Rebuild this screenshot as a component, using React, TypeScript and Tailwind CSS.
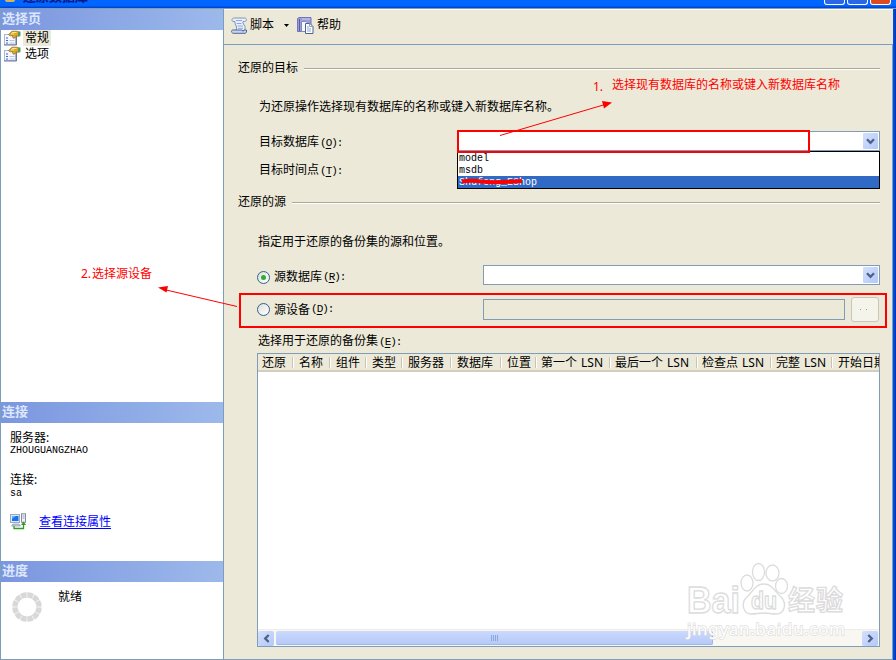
import { type ReactNode } from 'react';
import clsx from 'clsx';

const columns = [
  { label: '还原', width: 'w-[36px]' },
  { label: '名称', width: 'w-[37px]' },
  { label: '组件', width: 'w-[36px]' },
  { label: '类型', width: 'w-[36px]' },
  { label: '服务器', width: 'w-[49px]' },
  { label: '数据库', width: 'w-[50px]' },
  { label: '位置', width: 'w-[35px]' },
  { label: '第一个', lsn: true, width: 'w-[74px]' },
  { label: '最后一个', lsn: true, width: 'w-[87px]' },
  { label: '检查点', lsn: true, width: 'w-[74px]' },
  { label: '完整', lsn: true, width: 'w-[61px]' },
  { label: '开始日期', width: 'w-[60px]' },
];

function PropertiesIcon() {
  return (
    <svg width="17" height="16" viewBox="0 0 17 16" className="shrink-0">
      <rect x=".5" y="4.500" width="11" height="10" fill="#f6f8fe" stroke="#a9b6d3" />
      <path d="M0 15h12.500V6" fill="none" stroke="#6c7896" />
      <path d="M2 8h2M2 10.500h2M2 13h2" stroke="#3f62bd" />
      <path d="M5.500 10.500h5M5.500 13h5" stroke="#b5c3e6" />
      <path d="M4.500 4.500 8 1.200h5l2.500 1v4h-3l-2.500 2.300-1.800-1.500L9 5.200 6 5.800z" fill="#dba727" stroke="#7a5c22" strokeWidth=".6" />
      <path d="M8 2.500h4.500M7 4h3" stroke="#ffe885" />
      <path d="M14 1.500h2.500V6H14z" fill="#5a9a60" />
    </svg>
  );
}

function ScriptIcon() {
  return (
    <svg width="17" height="17" viewBox="0 0 17 17">
      <path d="M3.500 1h10c2.500 0 2.500 3.500 0 3.500H12V6l2 3.500v4H5.500V10L4 6.500v-2H2C0 3.500 1 1 3.500 1z" fill="#e9f0fd" stroke="#7f93b8" />
      <path d="M1.500 13h9.500l1 1.300 1-1.300h2.500v2l-1 1.300h-12C.2 16.300-.2 13.500 1.500 13z" fill="#c5d5f2" stroke="#52678f" />
      <path d="M5 3.500h6M5.500 6.500h5M6.500 9h5.500M7 11.300h5" stroke="#8da9df" />
    </svg>
  );
}

function HelpIcon() {
  return (
    <svg width="17" height="17" viewBox="0 0 17 17">
      <path d="M.5 1.500 2 .5h12v14H.500z" fill="#9d9edb" stroke="#7274b5" />
      <path d="M2.500 2v12" stroke="#5b5c9c" />
      <path d="M5 2h8" stroke="#c9caf1" />
      <path d="M4.500 4.500H9l2 2v8H4.500z" fill="#f6f8ff" stroke="#7f8cb5" />
      <path d="M8.500 6.500H13l3 3v7H8.500z" fill="#fff" stroke="#4d648e" />
      <path d="M12.500 6.500v3H16M10 10h2M10 12h4M10 14h4" fill="none" stroke="#8da5d3" />
    </svg>
  );
}

function ConnectionIcon() {
  return (
    <svg width="17" height="17" viewBox="0 0 17 17">
      <rect x=".5" y="1.500" width="9" height="8" fill="#dce7f8" stroke="#9aaac6" />
      <rect x="2" y="3" width="6.500" height="5" fill="#1b72e8" />
      <path d="M2 3h4L2 6z" fill="#5cafff" />
      <path d="M3 11h6l1.500 2H1.500z" fill="#c4cddd" stroke="#8b98ad" strokeWidth=".7" />
      <rect x="11.500" y=".8" width="4" height="8.500" fill="#eef0f5" stroke="#858e9f" />
      <path d="M12.500 3h2M12.500 5h2" stroke="#9aa3b4" />
      <path d="M4 13v2.500h9.500V11" fill="none" stroke="#329b22" strokeWidth="1.300" />
      <path d="m11 12 2.500-3.500L16 12z" fill="#329b22" />
    </svg>
  );
}

function Spinner() {
  const segments = Array.from({ length: 12 }, (_, i) => i * 30 + 15);
  return (
    <svg width="30" height="30" viewBox="-15 -15 30 30">
      {segments.map((angle) => (
        <path key={angle} d="M-2.200-9-3.400-14.300Q0-15.500 3.400-14.300L2.200-9Q0-9.800-2.200-9z" fill="#d8d8d8" transform={`rotate(${angle})`} />
      ))}
    </svg>
  );
}

function Chevron({ className }: { className?: string }) {
  return (
    <svg width="9" height="7" viewBox="0 0 9 7" className={className}>
      <path d="m1 1.300 3.500 3.500L8 1.300" fill="none" stroke="#4d6185" strokeWidth="2.300" />
    </svg>
  );
}

function Combo({ className }: { className?: string }) {
  return (
    <div className={clsx('flex items-center justify-end border border-[#7f9db9] bg-white pr-px', className)}>
      <div className="flex h-[16px] w-[15px] items-center justify-center rounded-[1px] bg-linear-to-br from-[#d3dffd] to-[#b4c8f7]">
        <Chevron />
      </div>
    </div>
  );
}

function Mnemonic({ letter }: { letter: string }) {
  return (
    <span className="ml-px font-['Liberation_Mono'] text-[11px] leading-none tracking-[-1px]">
      (<u className="underline-offset-2">{letter}</u>):
    </span>
  );
}

function PanelHeader({ children }: { children: ReactNode }) {
  return (
    <h2 className="flex h-[21px] shrink-0 items-center bg-linear-to-r from-[#7b96df] to-[#9db9eb] pb-[4px] pl-px text-[13px] font-bold text-[#dce7fc]">
      {children}
    </h2>
  );
}

function GroupTitle({ children }: { children: ReactNode }) {
  return (
    <div className="flex h-[20px] items-center gap-[6px]">
      <span>{children}</span>
      <span className="mt-px h-[2px] flex-1 border-t border-[#aca899] bg-white" />
    </div>
  );
}

function Radio({ checked }: { checked?: boolean }) {
  return (
    <span className="mr-[4px] flex size-[13px] items-center justify-center rounded-full border border-[#315f91] bg-linear-to-br from-[#dfdfda] to-white">
      {checked && <span className="size-[5px] rounded-full bg-[#2fae2f]" />}
    </span>
  );
}

function Sidebar() {
  return (
    <aside className="flex w-[224px] shrink-0 flex-col border-x border-b border-[#7b9ebd] bg-white">
      <PanelHeader>选择页</PanelHeader>
      <ul className="h-[372px]">
        {['常规', '选项'].map((item, i) => (
          <li key={item} className="flex h-[16px] items-center pl-[3px]">
            <PropertiesIcon />
            <span className={clsx('ml-[2px] flex h-[16px] items-center pr-[2px] pl-[2px]', i === 0 && 'bg-[#ece9d8]')}>{item}</span>
          </li>
        ))}
      </ul>
      <PanelHeader>连接</PanelHeader>
      <div className="flex h-[138px] flex-col pt-[7px] pl-[9px]">
        <span className="h-[15px] leading-[15px]">服务器:</span>
        <span className="h-[12px] font-['Liberation_Mono'] text-[10px] leading-[12px]">ZHOUGUANGZHAO</span>
        <span className="mt-[15px] h-[15px] leading-[15px]">连接:</span>
        <span className="h-[12px] font-['Liberation_Mono'] text-[10px] leading-[13px]">sa</span>
        <div className="mt-[14px] flex items-center gap-[12px]">
          <ConnectionIcon />
          <a className="text-[#0000ff] underline underline-offset-2">查看连接属性</a>
        </div>
      </div>
      <PanelHeader>进度</PanelHeader>
      <div className="flex flex-1 pt-[10px] pl-[11px]">
        <Spinner />
        <span className="-mt-[3px] ml-[16px]">就绪</span>
      </div>
    </aside>
  );
}

function Toolbar() {
  return (
    <div className="flex h-[35px] shrink-0 items-center border-b border-[#7b9ebd] pb-[4px] pl-[7px]">
      <ScriptIcon />
      <span className="ml-[2px]">脚本</span>
      <svg width="5" height="3" className="ml-[10px]">
        <path d="M0 0h5L2.500 3z" />
      </svg>
      <span className="ml-[8px]">
        <HelpIcon />
      </span>
      <span className="ml-[3px]">帮助</span>
    </div>
  );
}

function ScrollButton({ left }: { left?: boolean }) {
  return (
    <div className="flex h-[15px] w-[16px] shrink-0 items-center justify-center rounded-[2px] bg-linear-to-br from-[#d3dffd] to-[#b4c8f7]">
      <Chevron className={left ? 'rotate-90' : '-rotate-90'} />
    </div>
  );
}

function BackupTable() {
  return (
    <div className="-ml-px flex h-[294px] flex-col border border-[#7f9db9] bg-white">
      <div className="flex h-[18px] shrink-0 overflow-hidden border-b-2 border-[#d2cebd] bg-[#ece9d8]">
        {columns.map((col, i) => (
          <div key={col.label} className={clsx('flex shrink-0 items-center justify-between pt-px whitespace-nowrap', i === 0 || col.lsn ? 'pl-[4px]' : 'pl-[5px]', col.width)}>
            <span>
              {col.label}
              {col.lsn && <span className="ml-[4px]">LSN</span>}
            </span>
            <span className="h-[11px] w-[2px] border-l border-[#c7c5b2] bg-white" />
          </div>
        ))}
      </div>
      <div className="flex-1" />
      <div className="flex h-[17px] shrink-0 items-center border-t border-[#eeede5] bg-[#f8f7f2] pr-px">
        <ScrollButton left />
        <div className="ml-[2px] flex h-[14px] w-[437px] items-center justify-center gap-px rounded-[2px] border-r border-b border-[#9fb5e8] bg-linear-to-b from-[#cbd9fd] to-[#b5c9f9]">
          {[0, 1, 2, 3].map((n) => (
            <span key={n} className="h-[6px] w-px bg-[#8ca5dd]" />
          ))}
        </div>
        <div className="flex-1" />
        <ScrollButton />
      </div>
    </div>
  );
}

function Watermark() {
  return (
    <svg width="166" height="80" viewBox="0 0 166 80" className="absolute top-[560px] left-[684px]" fill="#fff" stroke="#dcdcdc" strokeWidth="1.300">
      <text x="3" y="53" fontSize="36" fontWeight="700" fontFamily="Liberation Sans" textLength="53" lengthAdjust="spacingAndGlyphs">Bai</text>
      <ellipse cx="63" cy="23" rx="6" ry="8" />
      <ellipse cx="74.500" cy="12" rx="6" ry="8.500" />
      <ellipse cx="88.500" cy="13" rx="6.500" ry="8" />
      <ellipse cx="97.500" cy="26" rx="6" ry="7.500" />
      <path d="M80 24c8 0 11 8 17 13 6 6 4 17-5 17-5 0-7-1-12-1s-8 1-13 1c-8 0-10-11-5-16 7-6 9-14 18-14z" />
      <text x="67" y="49" fontSize="23" fontFamily="Liberation Sans" fontWeight="700" textLength="26" lengthAdjust="spacingAndGlyphs">du</text>
      <text x="104" y="50" fontSize="27" fontWeight="700" fontFamily="Noto Sans CJK SC" textLength="55">经验</text>
      <text x="3" y="75" fontSize="17" fontFamily="Noto Sans" stroke="#dedede" strokeWidth="1.400" paintOrder="stroke" textLength="158">jingyan.baidu.com</text>
    </svg>
  );
}

function Annotations() {
  return (
    <div className="pointer-events-none absolute inset-0 z-20 text-[#ff0000]">
      <div className="absolute top-[130px] left-[457px] h-[23px] w-[353px] border-2 border-[#ff0000]" />
      <div className="absolute top-[293px] left-[239px] h-[35px] w-[648px] border-2 border-[#ff0000]" />
      <span className="absolute top-[78px] left-[593px] leading-[18px]">1.</span>
      <span className="absolute top-[76px] left-[612px] leading-[18px] whitespace-nowrap">选择现有数据库的名称或键入新数据库名称</span>
      <span className="absolute top-[265px] left-[81px] leading-[18px] whitespace-nowrap">
        2.<span className="ml-px">选择源设备</span>
      </span>
      <svg width="896" height="660" className="absolute inset-0" stroke="#ff0000" fill="#ff0000">
        <path d="M500 135.500 605 104.500M237 306.500 164 289.500" />
        <path d="m602 101 10 1.500-8 6zM158 287.500l10-1.500-1.500 6.500z" stroke="none" />
        <path d="M462 181.500q10-1.500 20 0t40-.5" fill="none" strokeWidth="4" />
      </svg>
    </div>
  );
}

export default function App() {
  return (
    <div className="relative flex h-[660px] w-[896px] flex-col overflow-hidden bg-[#ece9d8] font-['Noto_Sans','Noto_Sans_CJK_SC',sans-serif] text-[12px] leading-[16px] text-black">
      <header className="flex h-[9px] shrink-0 items-start justify-between overflow-hidden border-b border-[#7b9ebd] bg-linear-to-b from-[#0066ff] from-70% to-[#003dc8] pr-[5px]">
        <div className="flex items-start gap-[8px] pl-[5px]">
          <span className="h-[2px] w-[10px] rounded-b-full bg-[#d8b55b]" />
          <span className="flex h-[3px] items-end overflow-hidden text-[13px] leading-[14px] font-bold text-[#0a1883]">还原数据库</span>
        </div>
        <div className="flex gap-[2px]">
          <span className="h-[5px] w-[21px] rounded-b-[3px] border border-t-0 border-white bg-[#2b66e5]" />
          <span className="h-[5px] w-[21px] rounded-b-[3px] border border-t-0 border-white bg-[#2b66e5]" />
          <span className="h-[5px] w-[21px] rounded-b-[3px] border border-t-0 border-white bg-[#dc4a20]" />
        </div>
      </header>
      <div className="flex min-h-0 flex-1">
        <Sidebar />
        <main className="flex min-w-0 flex-1 flex-col border-t border-white">
          <Toolbar />
          <div className="flex flex-1 flex-col border-r border-b border-[#7b9ebd] pt-[13px] pr-[12px] pl-[14px]">
            <GroupTitle>还原的目标</GroupTitle>
            <div className="flex flex-col pl-[21px]">
              <p className="mt-[21px] h-[16px]">为还原操作选择现有数据库的名称或键入新数据库名称。</p>
              <div className="mt-[16px] flex h-[21px] items-center">
                <span className="h-[16px] w-[198px]">目标数据库<Mnemonic letter="O" /></span>
                <div className="relative h-[21px] flex-1">
                  <Combo className="h-[20px]" />
                  <ul className="absolute top-[20px] right-0 left-0 z-10 border border-black bg-white font-['Liberation_Mono'] text-[10px] leading-[14px]">
                    <li className="h-[12px] pl-px">model</li>
                    <li className="h-[12px] pl-px">msdb</li>
                    <li className="h-[12px] bg-[#316ac5] pl-px text-white">Shufeng_EShop</li>
                  </ul>
                </div>
              </div>
              <div className="mt-[10px] h-[16px]">目标时间点<Mnemonic letter="T" /></div>
            </div>
            <div className="mt-[14px]">
              <GroupTitle>还原的源</GroupTitle>
            </div>
            <div className="flex flex-col pl-[20px]">
              <p className="mt-[22px] h-[16px]">指定用于还原的备份集的源和位置。</p>
              <div className="mt-[15px] flex h-[20px] items-center">
                <div className="-ml-px flex w-[226px] items-center pt-[4px]">
                  <Radio checked />源数据库<Mnemonic letter="R" />
                </div>
                <Combo className="h-[20px] flex-1" />
              </div>
              <div className="mt-[12px] flex h-[25px] items-center">
                <div className="-ml-px flex w-[226px] items-center">
                  <Radio />源设备<Mnemonic letter="D" />
                </div>
                <div className="h-[21px] w-[362px] border border-[#7f9db9]" />
                <div className="ml-[6px] flex h-[25px] w-[28px] items-center justify-center gap-[5px] rounded-[3px] border border-[#c9c7ba] bg-[#f5f4ea] pr-[4px]">
                  <span className="size-px bg-[#a19f91]" />
                  <span className="size-px bg-[#a19f91]" />
                </div>
              </div>
              <div className="mt-[11px] mb-[4px] h-[16px]">选择用于还原的备份集<Mnemonic letter="E" /></div>
              <BackupTable />
            </div>
          </div>
        </main>
        <div className="w-[3px] shrink-0 bg-linear-to-r from-[#0054e5] to-[#0033b8]" />
      </div>
      <Watermark />
      <Annotations />
    </div>
  );
}
